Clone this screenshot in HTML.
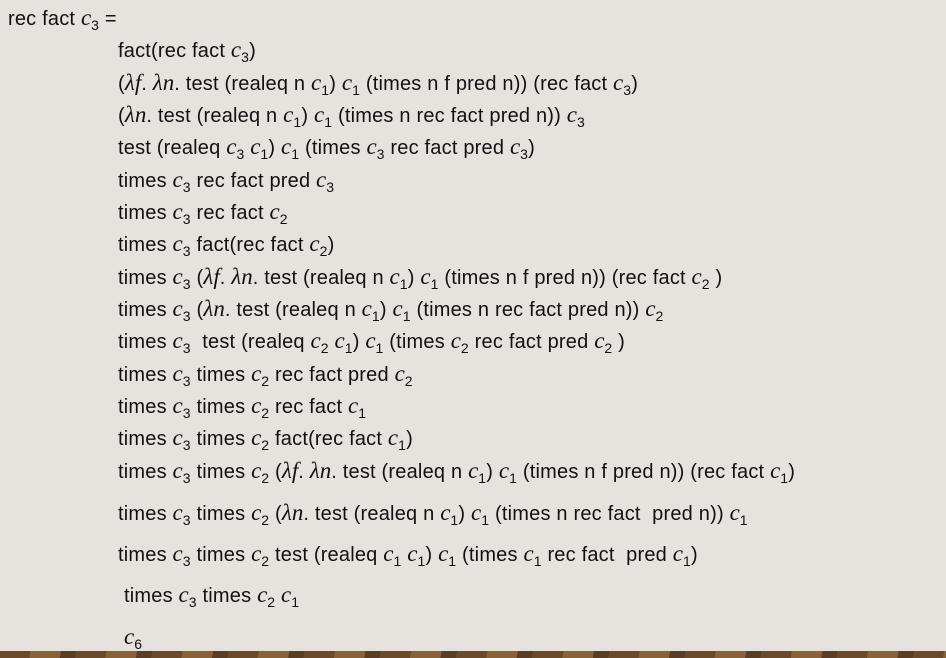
<!DOCTYPE html>
<html><head><meta charset="utf-8"><style>
html,body{margin:0;padding:0}
body{width:946px;height:658px;background:#e6e3de;position:relative;overflow:hidden;font-family:"Liberation Sans",sans-serif;color:#111}
.l{position:absolute;white-space:nowrap;font-size:20px;line-height:24px;letter-spacing:0.2px}
i{font-family:"Liberation Serif",serif;font-style:italic;font-size:23px;letter-spacing:0}
sub{font-family:"Liberation Sans",sans-serif;font-style:normal;font-size:14px;vertical-align:-5px;line-height:0}
.wood{position:absolute;left:0;top:651px;width:946px;height:7px;background:repeating-linear-gradient(100deg,#6b4a2a 0 30px,#8a6238 30px 60px,#5a3d22 60px 75px)}
</style></head><body>
<div class="l" style="left:8px;top:6px">rec fact <i>c</i><sub>3</sub> =</div>
<div class="l" style="left:118px;top:38px">fact(rec fact <i>c</i><sub>3</sub>)</div>
<div class="l" style="left:118px;top:71px">(<i>λf</i>. <i>λn</i>. test (realeq n <i>c</i><sub>1</sub>) <i>c</i><sub>1</sub> (times n f pred n)) (rec fact <i>c</i><sub>3</sub>)</div>
<div class="l" style="left:118px;top:103px">(<i>λn</i>. test (realeq n <i>c</i><sub>1</sub>) <i>c</i><sub>1</sub> (times n rec fact pred n)) <i>c</i><sub>3</sub></div>
<div class="l" style="left:118px;top:135px">test (realeq <i>c</i><sub>3</sub> <i>c</i><sub>1</sub>) <i>c</i><sub>1</sub> (times <i>c</i><sub>3</sub> rec fact pred <i>c</i><sub>3</sub>)</div>
<div class="l" style="left:118px;top:168px">times <i>c</i><sub>3</sub> rec fact pred <i>c</i><sub>3</sub></div>
<div class="l" style="left:118px;top:200px">times <i>c</i><sub>3</sub> rec fact <i>c</i><sub>2</sub></div>
<div class="l" style="left:118px;top:232px">times <i>c</i><sub>3</sub> fact(rec fact <i>c</i><sub>2</sub>)</div>
<div class="l" style="left:118px;top:265px">times <i>c</i><sub>3</sub> (<i>λf</i>. <i>λn</i>. test (realeq n <i>c</i><sub>1</sub>) <i>c</i><sub>1</sub> (times n f pred n)) (rec fact <i>c</i><sub>2</sub> )</div>
<div class="l" style="left:118px;top:297px">times <i>c</i><sub>3</sub> (<i>λn</i>. test (realeq n <i>c</i><sub>1</sub>) <i>c</i><sub>1</sub> (times n rec fact pred n)) <i>c</i><sub>2</sub></div>
<div class="l" style="left:118px;top:329px">times <i>c</i><sub>3</sub>&nbsp; test (realeq <i>c</i><sub>2</sub> <i>c</i><sub>1</sub>) <i>c</i><sub>1</sub> (times <i>c</i><sub>2</sub> rec fact pred <i>c</i><sub>2</sub> )</div>
<div class="l" style="left:118px;top:362px">times <i>c</i><sub>3</sub> times <i>c</i><sub>2</sub> rec fact pred <i>c</i><sub>2</sub></div>
<div class="l" style="left:118px;top:394px">times <i>c</i><sub>3</sub> times <i>c</i><sub>2</sub> rec fact <i>c</i><sub>1</sub></div>
<div class="l" style="left:118px;top:426px">times <i>c</i><sub>3</sub> times <i>c</i><sub>2</sub> fact(rec fact <i>c</i><sub>1</sub>)</div>
<div class="l" style="left:118px;top:459px">times <i>c</i><sub>3</sub> times <i>c</i><sub>2</sub> (<i>λf</i>. <i>λn</i>. test (realeq n <i>c</i><sub>1</sub>) <i>c</i><sub>1</sub> (times n f pred n)) (rec fact <i>c</i><sub>1</sub>)</div>
<div class="l" style="left:118px;top:501px">times <i>c</i><sub>3</sub> times <i>c</i><sub>2</sub> (<i>λn</i>. test (realeq n <i>c</i><sub>1</sub>) <i>c</i><sub>1</sub> (times n rec fact&nbsp; pred n)) <i>c</i><sub>1</sub></div>
<div class="l" style="left:118px;top:542px">times <i>c</i><sub>3</sub> times <i>c</i><sub>2</sub> test (realeq <i>c</i><sub>1</sub> <i>c</i><sub>1</sub>) <i>c</i><sub>1</sub> (times <i>c</i><sub>1</sub> rec fact&nbsp; pred <i>c</i><sub>1</sub>)</div>
<div class="l" style="left:124px;top:583px">times <i>c</i><sub>3</sub> times <i>c</i><sub>2</sub> <i>c</i><sub>1</sub></div>
<div class="l" style="left:124px;top:625px"><i>c</i><sub>6</sub></div>
<div class="wood"></div>
</body></html>
